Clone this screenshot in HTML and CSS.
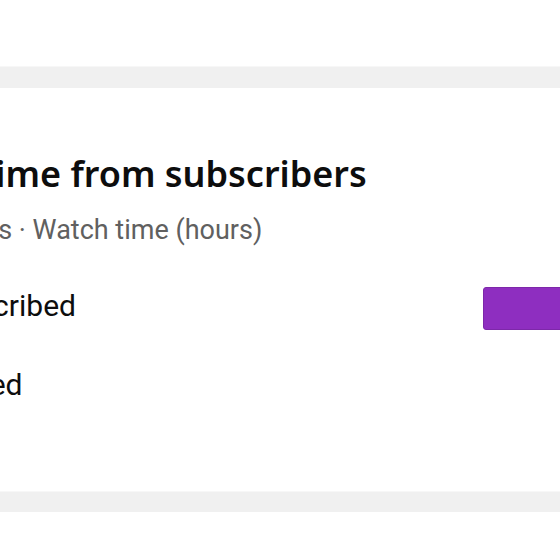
FILE: index.html
```html
<!DOCTYPE html>
<html>
<head>
<meta charset="utf-8">
<link rel="stylesheet" href="styles.css">
</head>
<body>
<div class="page">
  <div class="spacer-top"></div>
  <div class="band"></div>
  <section class="card">
    <div class="inner">
      <h2 class="title">Watch time from subscribers</h2>
      <p class="subtitle">Last 28 days · Watch time (hours)</p>
      <div class="rows">
        <div class="row">
          <span class="label">Not subscribed</span>
          <div class="bar-track"><div class="bar" style="width: 100%"></div></div>
        </div>
        <div class="row">
          <span class="label">Subscribed</span>
          <div class="bar-track"></div>
        </div>
      </div>
    </div>
  </section>
  <div class="band band-bottom"></div>
</div>
</body>
</html>
```

FILE: styles.css
```css
html, body {
  margin: 0;
  padding: 0;
  background: #ffffff;
}
.page {
  width: 560px;
  height: 560px;
  overflow: hidden;
}
.spacer-top {
  height: 66px;
  background: #ffffff;
}
.band {
  height: 22px;
  background: #f0f0f0;
  box-shadow: inset 0 1px 0 #f7f7f7;
}
.band-bottom {
  height: 21px;
}
.card {
  height: 403px;
  background: #ffffff;
  overflow: hidden;
}
.inner {
  margin-left: -115px;
  padding-top: 66px;
}
.title {
  margin: 0;
  text-indent: -24px;
  font-family: "Noto Sans", "Open Sans", sans-serif;
  font-weight: 600;
  font-size: 36px;
  line-height: 40px;
  color: #0d0d0d;
  white-space: nowrap;
}
.subtitle {
  margin: 20px 0 0;
  text-indent: -25px;
  font-family: Roboto, "Liberation Sans", sans-serif;
  font-size: 27px;
  line-height: 32px;
  color: #606060;
  white-space: nowrap;
}
.rows {
  margin-top: 41px;
  display: flex;
  flex-direction: column;
  gap: 36px;
}
.row {
  display: flex;
  align-items: flex-start;
  height: 43px;
}
.label {
  flex: 0 0 598px;
  text-indent: -12px;
  font-family: Roboto, "Liberation Sans", sans-serif;
  font-size: 30px;
  line-height: 38px;
  color: #0d0d0d;
  white-space: nowrap;
}
.bar-track {
  flex: 1 0 200px;
  height: 43px;
}
.bar {
  height: 43px;
  box-sizing: border-box;
  background: #8e2ec0;
  border: 1px solid #7d28a9;
  border-radius: 3px;
}
```
